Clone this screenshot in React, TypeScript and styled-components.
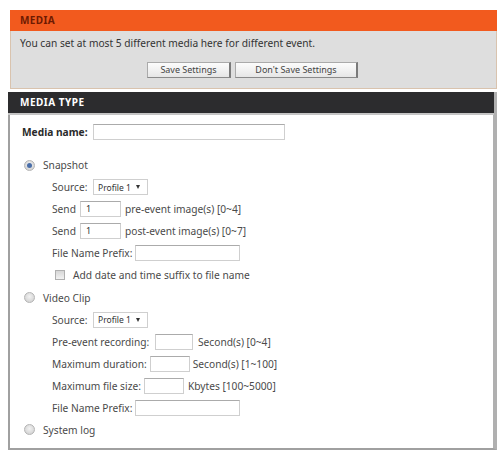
import React from "react";
import styled, { createGlobalStyle } from "styled-components";

const Global = createGlobalStyle`
  html, body { margin: 0; padding: 0; background: #ffffff; }
  body { font-family: "Noto Sans", "DejaVu Sans", sans-serif; font-size: 10.2px; color: #444; }
`;

const Page = styled.div`
  padding: 10px 2px 0 8px;
  display: flex;
  flex-direction: column;
  gap: 3px;
`;

const TopBox = styled.div`
  margin-left: 2px;
  width: 487px;
  border: 1px solid #d9c3ae;
  border-top: none;
  box-sizing: border-box;
  background: #dedede;
`;

const OrangeHead = styled.div`
  height: 21px;
  margin: 0 -1px;
  background: #f25a1e;
  color: #6e1a02;
  font-weight: bold;
  font-size: 10px;
  line-height: 21px;
  padding-left: 10px;
  letter-spacing: 0.4px;
`;

const InfoText = styled.div`
  padding: 5px 0 0 9px;
  height: 15px;
  line-height: 15px;
  color: #333;
`;

const ButtonRow = styled.div`
  display: flex;
  gap: 4px;
  padding: 11px 0 10px 136px;
`;

const Btn = styled.button<{ w: number }>`
  width: ${(p) => p.w}px;
  height: 16px;
  font-family: inherit;
  font-size: 9px;
  line-height: 14px;
  color: #444;
  background: linear-gradient(#fcfcfc, #e6e6e6);
  border: 1px solid #aaa;
  border-right: 2px solid #7a7a7a;
  border-bottom: 1px solid #8a8a8a;
  padding: 0;
`;

const MainBox = styled.div`
  width: 489px;
  box-sizing: border-box;
  border-left: 2px solid #a0a0a0;
  border-right: 4px solid #b0b0b0;
  border-bottom: 2px solid #a0a0a0;
  background: #fff;
  height: 358px;
`;

const DarkHead = styled.div`
  height: 21px;
  margin: 0 -1px 0 -2px;
  background: #2c2c2e;
  color: #fff;
  font-weight: bold;
  font-size: 10px;
  line-height: 21px;
  padding-left: 12px;
  letter-spacing: 0.5px;
  border-bottom: 2px solid #c4c4c4;
`;

const Body = styled.div`
  display: flex;
  flex-direction: column;
  padding: 6px 0 0 0;
`;

const Row = styled.div<{ indent: number; h?: number; mt?: number }>`
  display: flex;
  align-items: center;
  height: ${(p) => p.h ?? 22.08}px;
  margin-top: ${(p) => p.mt ?? 0}px;
  padding-left: ${(p) => p.indent}px;
  white-space: nowrap;
`;

const Label = styled.span<{ bold?: boolean; w?: number }>`
  display: inline-block;
  flex: none;
  min-width: ${(p) => (p.w ? `${p.w - 3}px` : "0")};
  margin-right: ${(p) => (p.w ? "3px" : "0")};
  font-weight: ${(p) => (p.bold ? "bold" : "normal")};
  color: ${(p) => (p.bold ? "#2a2a2a" : "#4a4a4a")};
`;

const Hint = styled.span<{ gap: number }>`
  margin-left: ${(p) => p.gap}px;
  color: #4a4a4a;
`;

const TextBox = styled.div<{ w: number }>`
  width: ${(p) => p.w}px;
  flex: none;
  height: 16px;
  box-sizing: border-box;
  border: 1px solid #cfcfcf;
  border-top-color: #ababab;
  background: #fff;
  font-size: 9px;
  line-height: 14px;
  padding-left: 5px;
  color: #333;
`;

const Select = styled.div<{ w: number }>`
  width: ${(p) => p.w}px;
  flex: none;
  height: 16px;
  box-sizing: border-box;
  border: 1px solid #cfcfcf;
  display: flex;
  align-items: center;
  justify-content: space-between;
  padding: 0 7px 0 4px;
  font-size: 8.5px;
  color: #333;
`;

const Arrow = styled.span`
  width: 0;
  height: 0;
  border-left: 2.5px solid transparent;
  border-right: 2.5px solid transparent;
  border-top: 4px solid #333;
`;

const Radio = styled.span<{ on?: boolean }>`
  width: 11px;
  height: 11px;
  flex: none;
  border-radius: 50%;
  box-sizing: border-box;
  border: 1px solid #b4b4b4;
  background: radial-gradient(circle at 50% 40%, #f2f2f2, #cbcbcb);
  display: inline-flex;
  align-items: center;
  justify-content: center;
  margin-right: 8px;
  &::after {
    content: "";
    width: 5px;
    height: 5px;
    border-radius: 50%;
    background: ${(p) => (p.on ? "#4a6ea8" : "transparent")};
  }
`;

const Check = styled.span`
  width: 10px;
  height: 10px;
  flex: none;
  box-sizing: border-box;
  border: 1px solid #b0b0b0;
  background: linear-gradient(#d6d6d6, #f2f2f2);
  margin-right: 8px;
`;

export default function App() {
  return (
    <>
      <Global />
      <Page>
        <TopBox>
          <OrangeHead>MEDIA</OrangeHead>
          <InfoText>You can set at most 5 different media here for different event.</InfoText>
          <ButtonRow>
            <Btn w={84}>Save Settings</Btn>
            <Btn w={123}>Don't Save Settings</Btn>
          </ButtonRow>
        </TopBox>
        <MainBox>
          <DarkHead>MEDIA TYPE</DarkHead>
          <Body>
            <Row h={22} indent={12}>
              <Label bold w={71}>Media name:</Label>
              <TextBox w={192} />
            </Row>
            <Row indent={14} mt={11}>
              <Radio on />
              <Label>Snapshot</Label>
            </Row>
            <Row indent={42}>
              <Label w={41}>Source:</Label>
              <Select w={55}>
                <span>Profile 1</span>
                <Arrow />
              </Select>
            </Row>
            <Row indent={42}>
              <Label w={28}>Send</Label>
              <TextBox w={41}>1</TextBox>
              <Hint gap={4}>pre-event image(s) [0~4]</Hint>
            </Row>
            <Row indent={42}>
              <Label w={28}>Send</Label>
              <TextBox w={41}>1</TextBox>
              <Hint gap={4}>post-event image(s) [0~7]</Hint>
            </Row>
            <Row indent={42}>
              <Label w={83}>File Name Prefix:</Label>
              <TextBox w={105} />
            </Row>
            <Row indent={45}>
              <Check />
              <Label>Add date and time suffix to file name</Label>
            </Row>
            <Row indent={14}>
              <Radio />
              <Label>Video Clip</Label>
            </Row>
            <Row indent={42}>
              <Label w={41}>Source:</Label>
              <Select w={55}>
                <span>Profile 1</span>
                <Arrow />
              </Select>
            </Row>
            <Row indent={42}>
              <Label w={103}>Pre-event recording:</Label>
              <TextBox w={38} />
              <Hint gap={5}>Second(s) [0~4]</Hint>
            </Row>
            <Row indent={42}>
              <Label w={93}>Maximum duration:</Label>
              <TextBox w={40} />
              <Hint gap={3}>Second(s) [1~100]</Hint>
            </Row>
            <Row indent={42}>
              <Label w={87}>Maximum file size:</Label>
              <TextBox w={40} />
              <Hint gap={4}>Kbytes [100~5000]</Hint>
            </Row>
            <Row indent={42}>
              <Label w={83}>File Name Prefix:</Label>
              <TextBox w={105} />
            </Row>
            <Row indent={14}>
              <Radio />
              <Label>System log</Label>
            </Row>
          </Body>
        </MainBox>
      </Page>
    </>
  );
}
